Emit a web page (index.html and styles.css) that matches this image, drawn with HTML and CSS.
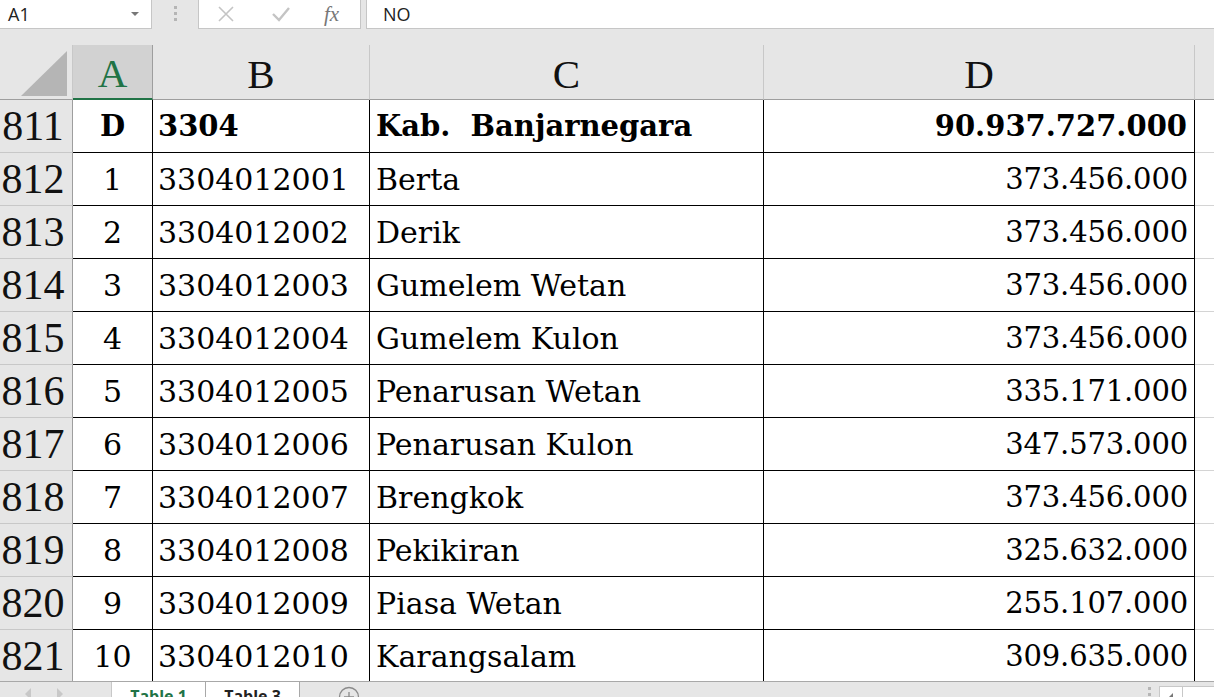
FILE: index.html
```html
<!DOCTYPE html>
<html>
<head>
<meta charset="utf-8">
<link rel="stylesheet" href="styles.css">
</head>
<body>
<div class="app">
  <div class="fbar">
    <div class="namebox"><span>A1</span><span class="dd"></span></div>
    <div class="grip"><i></i><i></i><i></i></div>
    <div class="fbtns">
      <svg class="ic" width="20" height="20" viewBox="0 0 20 20"><path d="M3 3 L17 17 M17 3 L3 17" stroke="#c4c4c4" stroke-width="1.6" fill="none"/></svg>
      <svg class="ic" width="20" height="20" viewBox="0 0 20 20"><path d="M2 10 L8 16 L18 4" stroke="#c4c4c4" stroke-width="2.4" fill="none"/></svg>
      <span class="fx">fx</span>
    </div>
    <div class="finput">NO</div>
  </div>
  <div class="spacer"></div>
  <div class="sheet">
    <div class="corner"><svg width="50" height="48" viewBox="0 0 50 48"><polygon points="48,2 48,47 2,47" fill="#b5b5b5"/></svg></div>
    <div class="ch sel">A</div>
    <div class="ch">B</div>
    <div class="ch">C</div>
    <div class="ch">D</div>
    <div class="ch last"></div>

    <div class="rh">811</div><div class="c ca b">D</div><div class="c cb b">3304</div><div class="c cc b">Kab.&nbsp; Banjarnegara</div><div class="c cd b">90.937.727.000</div><div class="c ce"></div>
    <div class="rh">812</div><div class="c ca">1</div><div class="c cb">3304012001</div><div class="c cc">Berta</div><div class="c cd">373.456.000</div><div class="c ce"></div>
    <div class="rh">813</div><div class="c ca">2</div><div class="c cb">3304012002</div><div class="c cc">Derik</div><div class="c cd">373.456.000</div><div class="c ce"></div>
    <div class="rh">814</div><div class="c ca">3</div><div class="c cb">3304012003</div><div class="c cc">Gumelem Wetan</div><div class="c cd">373.456.000</div><div class="c ce"></div>
    <div class="rh">815</div><div class="c ca">4</div><div class="c cb">3304012004</div><div class="c cc">Gumelem Kulon</div><div class="c cd">373.456.000</div><div class="c ce"></div>
    <div class="rh">816</div><div class="c ca">5</div><div class="c cb">3304012005</div><div class="c cc">Penarusan Wetan</div><div class="c cd">335.171.000</div><div class="c ce"></div>
    <div class="rh">817</div><div class="c ca">6</div><div class="c cb">3304012006</div><div class="c cc">Penarusan Kulon</div><div class="c cd">347.573.000</div><div class="c ce"></div>
    <div class="rh">818</div><div class="c ca">7</div><div class="c cb">3304012007</div><div class="c cc">Brengkok</div><div class="c cd">373.456.000</div><div class="c ce"></div>
    <div class="rh">819</div><div class="c ca">8</div><div class="c cb">3304012008</div><div class="c cc">Pekikiran</div><div class="c cd">325.632.000</div><div class="c ce"></div>
    <div class="rh">820</div><div class="c ca">9</div><div class="c cb">3304012009</div><div class="c cc">Piasa Wetan</div><div class="c cd">255.107.000</div><div class="c ce"></div>
    <div class="rh">821</div><div class="c ca">10</div><div class="c cb">3304012010</div><div class="c cc">Karangsalam</div><div class="c cd">309.635.000</div><div class="c ce"></div>
  </div>
  <div class="tabs">
    <div class="nav"><span class="tri l"></span><span class="tri r"></span></div>
    <div class="tab active">Table 1</div>
    <div class="tab">Table 3</div>
    <div class="add"><svg width="22" height="22" viewBox="0 0 22 22"><circle cx="11" cy="11" r="9.5" stroke="#8a8a8a" stroke-width="1.3" fill="none"/><path d="M11 6 V16 M6 11 H16" stroke="#8a8a8a" stroke-width="1.3"/></svg></div>
    <div class="fill"></div>
    <div class="grip2"><i></i><i></i></div>
    <div class="hscroll"><span class="tri l small"></span></div>
    <div class="hbar"></div>
  </div>
</div>
</body>
</html>
```

FILE: styles.css
```css
html, body {
  margin: 0;
  padding: 0;
  background: #e6e6e6;
  overflow: hidden;
}
.app {
  width: 1214px;
  height: 697px;
  overflow: hidden;
  background: #e6e6e6;
}
.fbar {
  display: flex;
  height: 30px;
  align-items: stretch;
  font-family: "Open Sans", "Noto Sans", sans-serif;
}
.namebox {
  width: 152px;
  height: 29px;
  box-sizing: border-box;
  background: #fff;
  border: 1px solid #c6c6c6;
  border-top: none;
  border-left: none;
  display: flex;
  align-items: center;
  justify-content: space-between;
  padding: 0 12px 0 8px;
  font-size: 18px;
  color: #222;
}
.dd {
  width: 0;
  height: 0;
  border-left: 4px solid transparent;
  border-right: 4px solid transparent;
  border-top: 4px solid #777;
}
.grip {
  width: 46px;
  display: flex;
  flex-direction: column;
  align-items: center;
  justify-content: center;
  gap: 3px;
  padding-bottom: 4px;
  box-sizing: border-box;
}
.grip i {
  display: block;
  width: 3px;
  height: 3px;
  background: #b5b5b5;
}
.fbtns {
  width: 163px;
  height: 29px;
  box-sizing: border-box;
  background: #fff;
  border: 1px solid #c6c6c6;
  border-top: none;
  display: flex;
  align-items: center;
  padding-left: 17px;
  gap: 35px;
}
.fbtns .ic { display: block; }
.fx {
  font-family: "Liberation Serif", serif;
  font-style: italic;
  font-size: 21px;
  color: #777;
  margin-left: -2px;
}
.finput {
  flex: 1;
  margin-left: 5px;
  height: 29px;
  box-sizing: border-box;
  background: #fff;
  border: 1px solid #c6c6c6;
  border-top: none;
  border-right: none;
  display: flex;
  align-items: center;
  padding-left: 16px;
  font-size: 18px;
  color: #222;
}
.spacer {
  height: 15px;
}
.sheet {
  display: grid;
  grid-template-columns: 73px 80px 217px 394px 431px 19px;
  grid-template-rows: 55px repeat(11, 53px);
  background: #fff;
}
.corner {
  background: #e6e6e6;
  border-right: 1px solid #c8c8c8;
  border-bottom: 1px solid #9e9e9e;
  box-sizing: border-box;
  display: flex;
  align-items: flex-end;
  justify-content: flex-end;
  padding: 0 3px 2px 0;
}
.corner svg { display: block; }
.ch {
  background: #e6e6e6;
  border-right: 1px solid #c8c8c8;
  border-bottom: 1px solid #9e9e9e;
  box-sizing: border-box;
  font-family: "Liberation Serif", serif;
  font-size: 41px;
  color: #111;
  display: flex;
  align-items: center;
  justify-content: center;
  padding-top: 3px;
}
.ch.sel {
  background: #d2d2d2;
  color: #217346;
  border-bottom: 2px solid #217346;
  border-right: 1px solid #9e9e9e;
}
.ch.last { border-right: none; }
.rh {
  background: #e6e6e6;
  border-right: 1px solid #9e9e9e;
  border-bottom: 1px solid #c8c8c8;
  box-sizing: border-box;
  font-family: "Liberation Serif", serif;
  font-size: 42px;
  color: #111;
  display: flex;
  align-items: center;
  justify-content: center;
  padding: 0 6px 0 0;
  line-height: 1;
}
.c {
  background: #fff;
  border-right: 1px solid #000;
  border-bottom: 1px solid #000;
  box-sizing: border-box;
  font-family: "DejaVu Serif", serif;
  font-size: 30px;
  color: #000;
  display: flex;
  align-items: center;
  white-space: pre;
  overflow: hidden;
}
.c.b { font-weight: bold; font-size: 29px; }
.ca { justify-content: center; }
.cb { padding-left: 5px; }
.cc { padding-left: 6px; }
.cd {
  justify-content: flex-end;
  padding-right: 6px;
  font-size: 29px;
  letter-spacing: -0.15px;
}
.cd.b { letter-spacing: 0; padding-right: 7px; }
.ce {
  border-right: none;
  border-bottom: 1px solid #d4d4d4;
}
.tabs {
  position: relative;
  z-index: 1;
  margin-top: -2px;
  height: 30px;
  background: #e6e6e6;
  border-top: 1px solid #a8a8a8;
  display: flex;
  align-items: stretch;
  font-family: "Open Sans", "Noto Sans", sans-serif;
  font-weight: bold;
  font-size: 16px;
}
.nav {
  width: 112px;
  display: flex;
  align-items: flex-start;
  padding: 6px 0 0 25px;
  gap: 26px;
  box-sizing: border-box;
  border-right: 1px solid #c8c8c8;
}
.tri {
  display: block;
  width: 0;
  height: 0;
  border-top: 6px solid transparent;
  border-bottom: 6px solid transparent;
}
.tri.l { border-right: 6px solid #c8c8c8; }
.tri.r { border-left: 6px solid #c8c8c8; }
.tab {
  width: 94px;
  box-sizing: border-box;
  background: #fff;
  border-right: 1px solid #a8a8a8;
  display: flex;
  justify-content: center;
  padding-top: 3px;
  color: #222;
}
.tab.active {
  color: #217346;
}
.add {
  width: 100px;
  padding: 4px 0 0 38px;
  box-sizing: border-box;
}
.add svg { display: block; }
.fill { flex: 1; }
.grip2 {
  width: 20px;
  display: flex;
  flex-direction: column;
  padding-top: 5px;
  gap: 3px;
  align-items: center;
}
.grip2 i {
  display: block;
  width: 3px;
  height: 3px;
  background: #b5b5b5;
}
.hscroll {
  width: 24px;
  background: #fff;
  border: 1px solid #c8c8c8;
  border-bottom: none;
  margin-top: 4px;
  box-sizing: border-box;
  display: flex;
  justify-content: center;
  padding-top: 6px;
}
.tri.small {
  border-top-width: 4px;
  border-bottom-width: 4px;
  border-right: 4px solid #777;
}
.hbar {
  width: 31px;
  background: #fff;
  margin-top: 4px;
  border-top: 1px solid #c8c8c8;
}
```
